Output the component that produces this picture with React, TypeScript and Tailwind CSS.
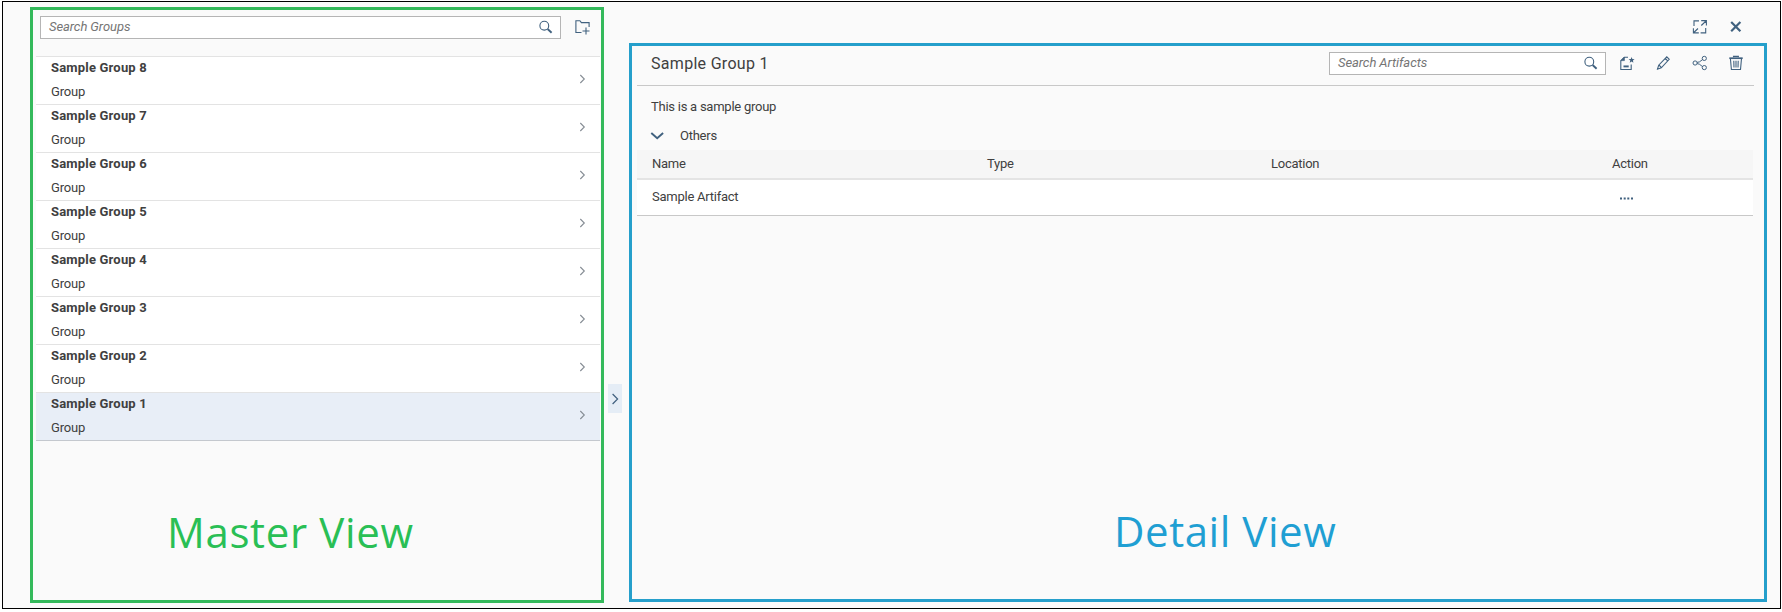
import type { ReactNode } from "react";

const groups = [8, 7, 6, 5, 4, 3, 2, 1];

function Icon({ children, w = 16, h = 16, className = "" }: { children: ReactNode; w?: number; h?: number; className?: string }) {
  return (
    <svg width={w} height={h} viewBox={`0 0 ${w} ${h}`} fill="none" stroke="currentColor" className={`block shrink-0 ${className}`}>
      {children}
    </svg>
  );
}

function SearchIcon() {
  return (
    <Icon className="text-[#40617f]">
      <circle cx="6.3" cy="5.7" r="4.4" strokeWidth="1.1" />
      <path d="M9.6 9 13.6 12.7" strokeWidth="1.9" />
    </Icon>
  );
}

function SearchField({ label, className }: { label: string; className: string }) {
  return (
    <div className={`flex h-[23px] items-center justify-between border border-[#b5b5b5] bg-white pl-2 pr-[6px] ${className}`}>
      <span className="-mt-[2px] text-[13px] leading-[20px] tracking-[-0.08px] text-[#757575] italic">{label}</span>
      <SearchIcon />
    </div>
  );
}

function MasterPanel() {
  return (
    <section className="mt-[5px] ml-[27px] flex h-[596px] w-[574px] shrink-0 flex-col border-[3px] border-[#34b95b] px-[3px]">
      <div className="mt-[6px] ml-1 flex h-[23px] items-center">
        <SearchField label="Search Groups" className="w-[521px]" />
        <Icon className="-mt-px ml-[13px] text-[#40617f]">
          <path d="M7.5 13.5H1.9V1.7h4l1.5 1.9h7.7v4.3M12 8.5v7M8.5 12h7" strokeWidth="1.1" />
        </Icon>
      </div>
      <ul className="mt-[17px] w-[564px] border-b border-[#c4c8ce]">
        {groups.map((n) => (
          <li key={n} className={`flex h-12 items-center justify-between border-t border-[#e3e3e3] pr-[14px] pl-[15px] ${n === 1 ? "bg-[#e8eef7]" : "bg-white"}`}>
            <div className="flex flex-col text-[13px] leading-6 text-[#404040]">
              <span className="-mt-[1px] font-bold tracking-[0.19px]">Sample Group {n}</span>
              <span className="tracking-[-0.15px]">Group</span>
            </div>
            <Icon w={8} h={10} className="mt-[-3px] text-[#858c94]">
              <path d="M2.3 1l4 4-4 4" strokeWidth="1.1" />
            </Icon>
          </li>
        ))}
      </ul>
      <h1 className="mt-[63px] ml-[131px] font-['Open_Sans'] text-[42px] leading-[56px] tracking-[0.65px] whitespace-nowrap text-[#29bf55]">Master View</h1>
    </section>
  );
}

function DetailPanel() {
  return (
    <section className="flex h-[559px] w-[1138px] flex-col border-[3px] border-[#259fcb] pl-[5px] text-[13px] tracking-[-0.25px] text-[#404040]">
      <header className="flex h-[40px] w-[1117px] items-center border-b border-[#c8c8c8] pl-[14px]">
        <h2 className="-mt-[4px] w-[678px] text-[16px] tracking-[0.3px]">Sample Group 1</h2>
        <SearchField label="Search Artifacts" className="-mt-[4px] w-[277px]" />
        <div className="-mt-[5px] flex gap-5 pl-[14px] text-[#40617f]">
          <Icon className="-ml-px">
            <path d="M9 2.2H5.4L1.8 5.7v8.8h10.4V9.5" strokeWidth="1.1" />
            <path d="M5.4 2v3.6H2z" fill="currentColor" strokeWidth=".7" />
            <path d="M4.5 11.4h5.2" strokeWidth="1.9" />
            <path d="M12.6 2l.8 2 2.2.2-1.7 1.4.5 2.1-1.8-1.1-1.9 1.1.6-2.1-1.7-1.4 2.2-.2z" fill="currentColor" stroke="none" />
          </Icon>
          <Icon className="ml-px">
            <path d="M1.5 14.2l1.2-4L10.8 1.9l2.4 2.4-7.9 8.5zM9.3 3.5l2.4 2.4M2.9 10l2.6 2.7" strokeWidth="1.1" />
          </Icon>
          <Icon>
            <circle cx="3.1" cy="8" r="2.1" />
            <circle cx="12.3" cy="3.4" r="2.1" />
            <circle cx="12.3" cy="12.6" r="2.1" />
            <path d="M5.1 7.4 7.4 6.9 10.6 4.6M5.1 8.6 7.4 9.2 10.5 11.6" />
          </Icon>
          <Icon>
            <path d="M1.3 3.2h13.4" strokeWidth="1.7" />
            <path d="M5.5 2.3V1.4h4.9v.9M2.4 3.5l1 11h9.1l1-11M5.8 5.7l.2 6.7M8 5.7v6.7M10.2 5.7l-.2 6.7" strokeWidth="1.1" />
          </Icon>
        </div>
      </header>
      <p className="mt-[11px] pl-[14px] leading-5">This is a sample group</p>
      <div className="mt-[9px] flex h-5 items-center pl-[13px]">
        <Icon w={15} h={10} className="text-[#40617f]">
          <path d="M1.3 2l5.9 5.3L13.1 2" strokeWidth="1.9" />
        </Icon>
        <span className="ml-[15px]">Others</span>
      </div>
      <div className="mt-[4px] w-[1116px]">
        <div className="grid h-[30px] grid-cols-[335px_284px_341px_1fr] items-center border-b-2 border-[#e4e4e4] bg-[#f6f6f6] pl-[15px]">
          <span>Name</span>
          <span>Type</span>
          <span>Location</span>
          <span>Action</span>
        </div>
        <div className="grid h-[36px] grid-cols-[335px_284px_341px_1fr] items-center border-b border-[#c8c8c8] bg-white pl-[15px]">
          <span className="-mt-[2px]">Sample Artifact</span>
          <span />
          <span />
          <Icon w={14} h={3} className="mt-px ml-2 text-[#40617f]">
            <path d="M0 1.5h2M3.7 1.5h2M7.3 1.5h2M11 1.5h2" strokeWidth="2" />
          </Icon>
        </div>
      </div>
      <h1 className="mt-[287px] ml-[477px] font-['Open_Sans'] text-[42px] leading-[56px] tracking-[0.55px] whitespace-nowrap text-[#1f9fd3]">Detail View</h1>
    </section>
  );
}

export default function App() {
  return (
    <main className="h-[612px] w-[1782px] overflow-hidden bg-white pt-px pl-[2px] font-['Roboto',sans-serif]">
      <div className="flex h-[608px] w-[1779px] border border-black bg-[#fafafa]">
        <MasterPanel />
        <div className="mt-[382px] ml-1 flex h-[29px] w-[14px] shrink-0 items-center justify-center bg-[#e5edf6] text-[#40617f]">
          <Icon w={8} h={12}>
            <path d="M1.6 1l5 5-5 5" strokeWidth="1.2" />
          </Icon>
        </div>
        <div className="ml-[7px] w-[1138px] shrink-0">
          <div className="flex h-[41px] justify-end gap-5 pt-[17px] pr-[23px] text-[#40617f]">
            <Icon>
              <path d="M7 1.9H2v5M9.2 1.6h5.2v5M14 2 9.3 6.5M13.7 9v4.9H8.6M6.8 13.9H1.4V9.2M1.8 13.5l4.2-4" strokeWidth="1.1" />
            </Icon>
            <Icon>
              <path d="M3.2 3l9.2 9.2M12.4 3 3.2 12.2" strokeWidth="2.2" />
            </Icon>
          </div>
          <DetailPanel />
        </div>
      </div>
    </main>
  );
}
